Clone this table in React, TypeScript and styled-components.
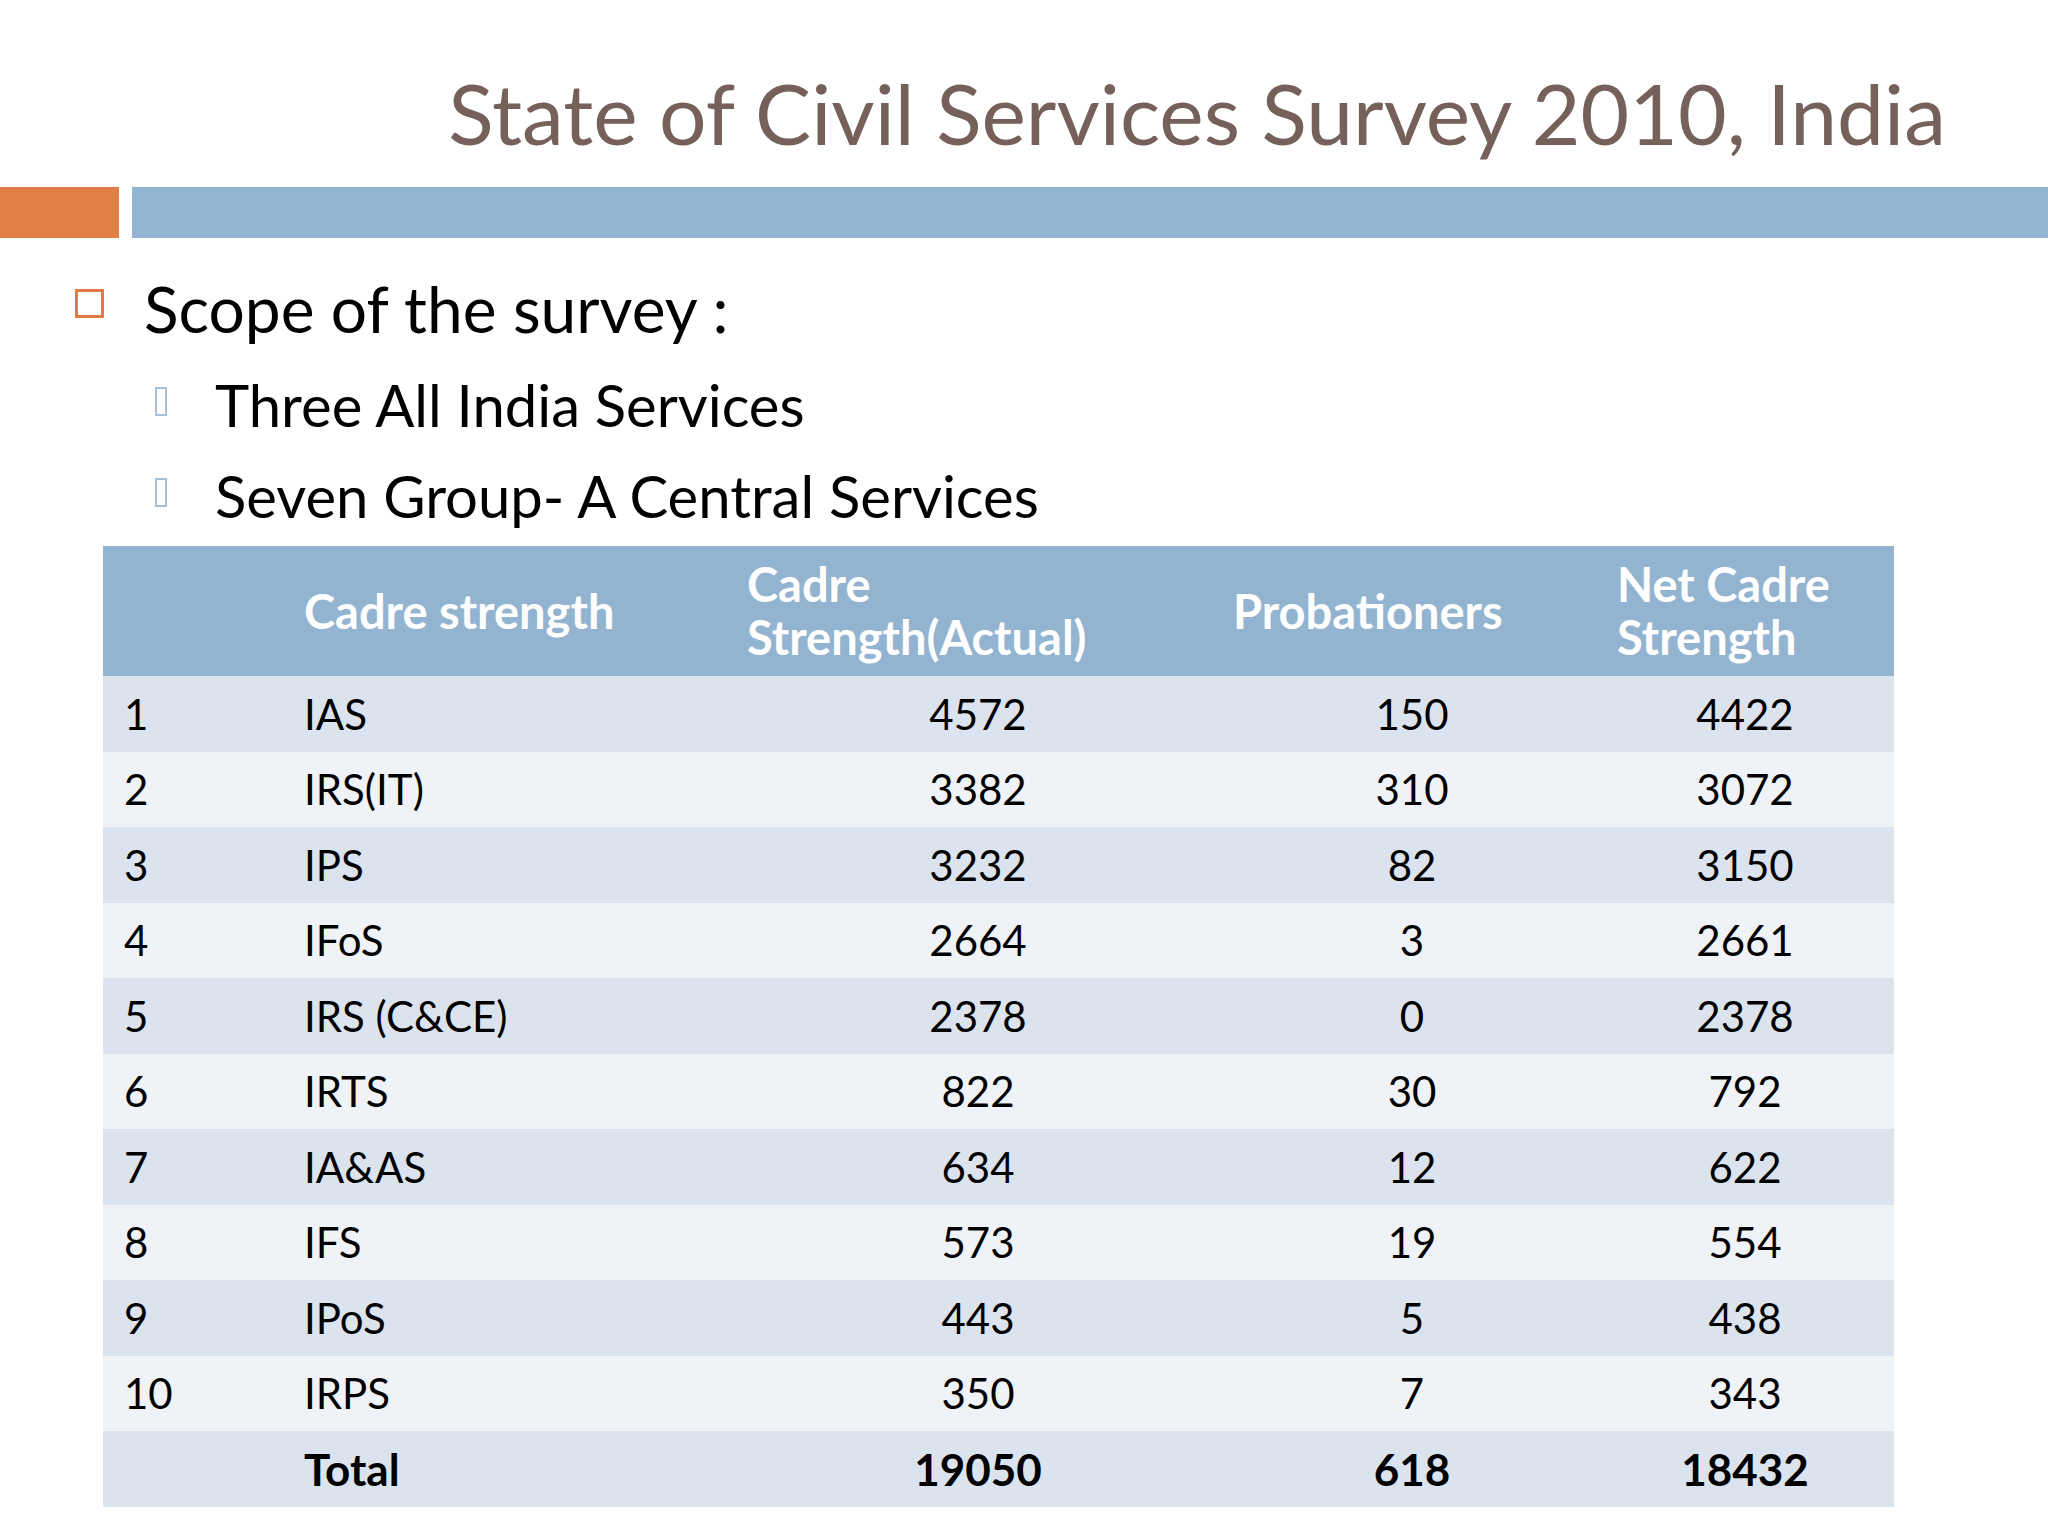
import styled, { createGlobalStyle } from "styled-components";

const GlobalStyle = createGlobalStyle`
  html, body {
    margin: 0;
    padding: 0;
    background: #ffffff;
  }
  body {
    font-family: Lato, "Open Sans", sans-serif;
  }
`;

const Slide = styled.div`
  width: 2048px;
  height: 1536px;
  background: #ffffff;
  overflow: hidden;
  display: flex;
  flex-direction: column;
`;

const Title = styled.h1`
  margin: 0;
  padding: 63px 102px 0 0;
  height: 100px;
  line-height: 100px;
  text-align: right;
  font-family: Lato, sans-serif;
  font-weight: 400;
  font-size: 84px;
  color: #75615a;
  white-space: nowrap;
`;

const AccentBar = styled.div`
  display: flex;
  gap: 13px;
  height: 51px;
  margin-top: 24px;
`;

const AccentBlock = styled.div<{ $color: string; $width?: number }>`
  background: ${(p) => p.$color};
  ${(p) => (p.$width ? `width: ${p.$width}px; flex: none;` : "flex: 1;")}
`;

const Bullets = styled.ul`
  list-style: none;
  margin: 31px 0 0;
  padding: 0;
`;

const BulletItem = styled.li<{ $level: number }>`
  display: flex;
  align-items: flex-start;
  color: #000;
  font-family: Lato, sans-serif;
  padding-left: ${(p) => (p.$level === 0 ? 75 : 155)}px;
  font-size: ${(p) => (p.$level === 0 ? 64 : 58)}px;
  line-height: ${(p) => (p.$level === 0 ? 80 : 91)}px;
  height: ${(p) => (p.$level === 0 ? 80 : 91)}px;
  white-space: nowrap;
  &:nth-child(2) {
    margin-top: 10px;
  }
`;

const SquareMark = styled.span`
  flex: none;
  box-sizing: border-box;
  width: 29px;
  height: 29px;
  margin-top: 20px;
  margin-right: 40px;
  border: 3px solid #e07b45;
`;

const TallMark = styled.span`
  flex: none;
  box-sizing: border-box;
  width: 12px;
  height: 29px;
  margin-top: 28px;
  margin-right: 48px;
  border: 2px solid #a7c1d9;
`;

const Table = styled.table`
  margin: 5px 0 0 103px;
  width: 1791px;
  border-collapse: collapse;
  table-layout: fixed;
  font-family: Lato, sans-serif;
`;

const HeadRow = styled.tr`
  background: #93b4d1;
  height: 130px;
`;

const HeadCell = styled.th`
  padding: 0 21px;
  text-align: left;
  vertical-align: middle;
  color: #ffffff;
  font-weight: 700;
  font-size: 47px;
  line-height: 53px;
  white-space: nowrap;
`;

const Row = styled.tr<{ $shade: boolean }>`
  background: ${(p) => (p.$shade ? "#dbe4ee" : "#eff2f6")};
  height: 75.5px;
`;

const Cell = styled.td<{ $center?: boolean; $bold?: boolean; $shift?: number }>`
  padding: 0 21px 0 ${(p) => 21 + (p.$shift ?? 0) * 2}px;
  text-align: ${(p) => (p.$center ? "center" : "left")};
  vertical-align: middle;
  color: #000;
  font-size: ${(p) => (p.$bold ? 44 : 42)}px;
  font-weight: ${(p) => (p.$bold ? 700 : 400)};
  white-space: nowrap;
`;

const rows: [string, string, string, string, string][] = [
  ["1", "IAS", "4572", "150", "4422"],
  ["2", "IRS(IT)", "3382", "310", "3072"],
  ["3", "IPS", "3232", "82", "3150"],
  ["4", "IFoS", "2664", "3", "2661"],
  ["5", "IRS (C&CE)", "2378", "0", "2378"],
  ["6", "IRTS", "822", "30", "792"],
  ["7", "IA&AS", "634", "12", "622"],
  ["8", "IFS", "573", "19", "554"],
  ["9", "IPoS", "443", "5", "438"],
  ["10", "IRPS", "350", "7", "343"],
];

export default function App() {
  return (
    <>
      <GlobalStyle />
      <Slide>
        <Title>State of Civil Services Survey 2010, India</Title>
        <AccentBar>
          <AccentBlock $color="#df7e45" $width={119} />
          <AccentBlock $color="#94b5d1" />
        </AccentBar>
        <Bullets>
          <BulletItem $level={0}>
            <SquareMark />
            Scope of the survey :
          </BulletItem>
          <BulletItem $level={1}>
            <TallMark />
            Three All India Services
          </BulletItem>
          <BulletItem $level={1}>
            <TallMark />
            Seven Group- A Central Services
          </BulletItem>
        </Bullets>
        <Table>
          <colgroup>
            <col style={{ width: 180 }} />
            <col style={{ width: 443 }} />
            <col style={{ width: 486 }} />
            <col style={{ width: 384 }} />
            <col style={{ width: 298 }} />
          </colgroup>
          <thead>
            <HeadRow>
              <HeadCell />
              <HeadCell>Cadre strength</HeadCell>
              <HeadCell>
                Cadre
                <br />
                Strength(Actual)
              </HeadCell>
              <HeadCell>Probationers</HeadCell>
              <HeadCell>
                Net Cadre
                <br />
                Strength
              </HeadCell>
            </HeadRow>
          </thead>
          <tbody>
            {rows.map((r, i) => (
              <Row key={r[0]} $shade={i % 2 === 0}>
                <Cell>{r[0]}</Cell>
                <Cell>{r[1]}</Cell>
                <Cell $center $shift={9}>{r[2]}</Cell>
                <Cell $center $shift={8}>{r[3]}</Cell>
                <Cell $center>{r[4]}</Cell>
              </Row>
            ))}
            <Row $shade>
              <Cell />
              <Cell $bold>Total</Cell>
              <Cell $center $bold $shift={9}>
                19050
              </Cell>
              <Cell $center $bold $shift={8}>
                618
              </Cell>
              <Cell $center $bold>
                18432
              </Cell>
            </Row>
          </tbody>
        </Table>
      </Slide>
    </>
  );
}
